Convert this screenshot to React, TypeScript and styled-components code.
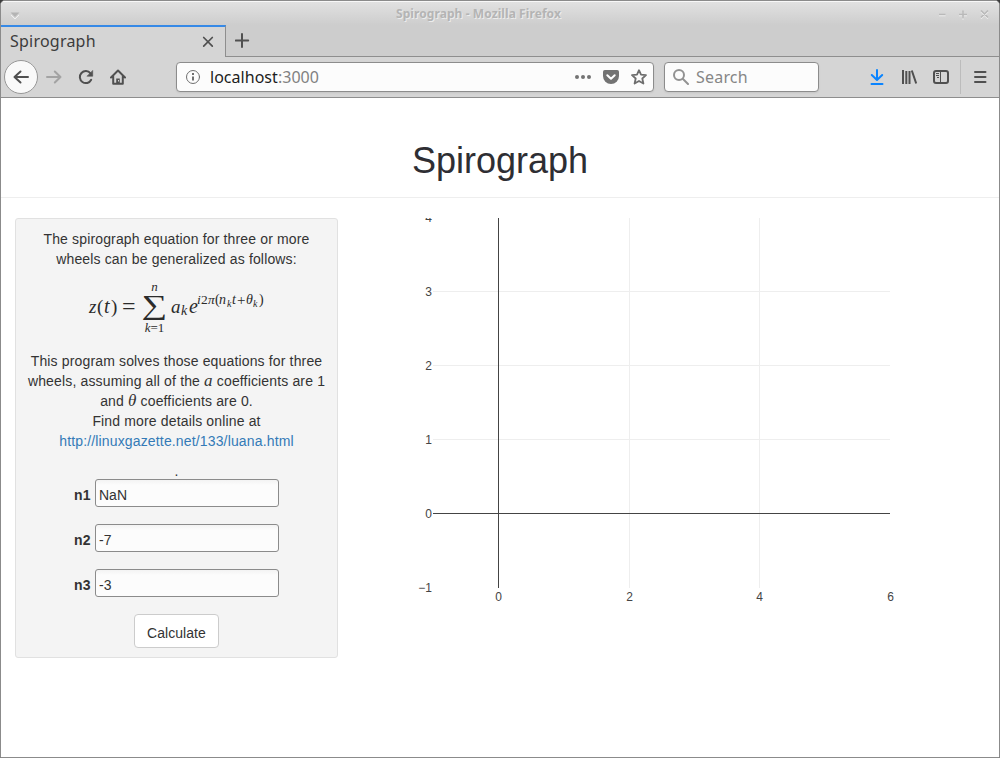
import React, { useState } from "react";
import styled, { createGlobalStyle } from "styled-components";

const UI = `"Noto Sans", "Open Sans", sans-serif`;
const PAGE = `"Liberation Sans", Arial, sans-serif`;
const MATH = `"Liberation Serif", "Times New Roman", serif`;

const GlobalStyle = createGlobalStyle`
  * { box-sizing: border-box; }
  html, body { margin: 0; padding: 0; background: #3c3c3c; overflow: hidden; }
`;

/* ---------- browser window ---------- */

const Window = styled.div`
  width: 1000px;
  height: 758px;
  display: flex;
  flex-direction: column;
  border: 1px solid #8b8b8b;
  border-radius: 5px 5px 0 0;
  background: #fff;
  overflow: hidden;
`;

const TitleBar = styled.div`
  height: 24px;
  flex: none;
  display: grid;
  grid-template-columns: 60px 1fr 60px;
  align-items: center;
  background: linear-gradient(#e1e1e1, #cdcdcd);
  border-top: 1px solid #f8f8f8;
`;

const WindowTitle = styled.div`
  margin-right: 43px;
  text-align: center;
  font: bold 12px/22px ${UI};
  letter-spacing: 0.08px;
  color: #b4b4b4;
  text-shadow: 1px 1px 0 #ececec;
`;

const TabStrip = styled.div`
  height: 32px;
  flex: none;
  display: flex;
  background: #cdcdcd;
`;

const Tab = styled.div`
  width: 225px;
  height: 32px;
  display: flex;
  align-items: center;
  justify-content: space-between;
  padding: 0 9px 2px 9px;
  border-top: 2px solid #3689e6;
  border-right: 1px solid #8e8e8e;
  background: #d5d5d5;
  font: 16px/28px ${UI};
  letter-spacing: 0.22px;
  color: #3c3c3c;
`;

const NewTab = styled.div`
  flex: 1;
  padding: 8px 0 0 9px;
  border-bottom: 1px solid #8e8e8e;
`;

const Toolbar = styled.div`
  height: 41px;
  flex: none;
  display: flex;
  align-items: center;
  background: #d5d5d5;
  border-bottom: 1px solid #8e8e8e;
  padding: 0 11px 0 3px;
`;

const Back = styled.div`
  width: 34px;
  height: 34px;
  display: flex;
  align-items: center;
  justify-content: center;
  border: 1px solid #979797;
  border-radius: 50%;
  background: #f9f9f9;
`;

const NavIcons = styled.div`
  display: flex;
  gap: 16px;
  margin-left: 8px;
`;

const Field = styled.div<{ $width: number; $gap: number }>`
  width: ${(p) => p.$width}px;
  height: 30px;
  display: flex;
  align-items: center;
  margin-left: ${(p) => p.$gap}px;
  border: 1px solid #8c8c8c;
  border-radius: 4px;
  background: #fcfcfc;
  box-shadow: 0 1px 2px rgba(0, 0, 0, 0.08);
  font: 16px/28px ${UI};
  padding: 0 6px 0 8px;
`;

const Address = styled.span`
  flex: 1;
  margin-left: 9px;
  color: #1d1d1d;
  letter-spacing: 0.03px;
`;

const Port = styled.span`
  color: #818181;
`;

const FieldIcons = styled.div`
  display: flex;
  gap: 12px;
`;

const SearchLabel = styled.span`
  margin-left: 7px;
  letter-spacing: 0.2px;
  color: #868686;
`;

const Tools = styled.div`
  display: flex;
  gap: 16px;
  margin-left: auto;
`;

const Divider = styled.div`
  width: 1px;
  height: 34px;
  margin: 0 11px;
  background: #bcbcbc;
`;

const Glyph16 = styled.svg.attrs({ width: 16, height: 16, viewBox: "0 0 16 16", fill: "none" })<{ $tone?: string }>`
  display: block;
  flex: none;
  stroke: ${(p) => p.$tone || "#505050"};
  stroke-width: 2;
  stroke-linecap: round;
  stroke-linejoin: round;
`;

const TitleGlyph = styled.svg`
  display: block;
`;

/* ---------- page ---------- */

const Page = styled.main`
  flex: 1;
  font: 14px/20px ${PAGE};
  color: #333;
`;

const Header = styled.header`
  height: 100px;
  padding-top: 43px;
  border-bottom: 1px solid #eee;
  text-align: center;
`;

const Heading = styled.h1`
  margin: 0;
  font: 400 36px/40px ${PAGE};
  color: #2e2e33;
`;

const Columns = styled.div`
  display: flex;
  gap: 15px;
  padding: 20px 14px 0;
`;

const Well = styled.section`
  width: 323px;
  height: 440px;
  padding: 10px 0 0;
  border: 1px solid #e1e1e1;
  border-radius: 3px;
  background: #f4f4f4;
  text-align: center;
`;

const Paragraph = styled.p`
  margin: 0;
  letter-spacing: 0.15px;
  white-space: nowrap;
`;

const Variable = styled.i`
  font: italic 17px/16px ${MATH};
`;

const Link = styled.a`
  color: #337ab7;
  text-decoration: none;
`;

const Formula = styled.div`
  display: flex;
  height: 72px;
  margin: 0 0 10px 73px;
  font-family: ${MATH};
  color: #2b2b2b;
  text-align: left;
`;

/* A symbol in a slot of fixed width, set on the given baseline of the formula. */
const Sym = styled.span<{ $w: number; $base: number; $size: number; $it?: boolean }>`
  display: block;
  width: ${(p) => p.$w}px;
  margin-top: ${(p) => p.$base - 9 - 0.3375 * p.$size}px;
  font-size: ${(p) => p.$size}px;
  line-height: 20px;
  height: 20px;
  font-style: ${(p) => (p.$it ? "italic" : "normal")};
  white-space: nowrap;
`;

const SumStack = styled.div`
  width: 29px;
  height: 72px;
  display: grid;
  grid-template-rows: 16px 25px 16px;
  justify-items: center;
  padding: 10px 4px 0 0;
`;

const Limit = styled.span`
  font-size: 13px;
  line-height: 16px;
  white-space: nowrap;
`;

const Sigma = styled.span`
  font-size: 27px;
  line-height: 20px;
  transform: scaleX(1.33);
`;

const Row = styled.label`
  display: flex;
  height: 28px;
  margin: 0 0 17px 58px;
  font-weight: bold;
  line-height: 32px;
`;

const RowName = styled.span`
  width: 21px;
  text-align: left;
  letter-spacing: 0.3px;
`;

const Input = styled.input`
  width: 184px;
  height: 28px;
  padding: 4px 3px 0;
  border: 1px solid #8b8b8b;
  border-radius: 3px;
  background: linear-gradient(#f3f3f3, #fcfcfc 5px);
  font: 14px/20px ${PAGE};
  color: #333;
  outline: none;
`;

const Dot = styled.div`
  height: 18px;
  margin-top: 10px;
`;

const Button = styled.button`
  width: 85px;
  height: 34px;
  display: block;
  margin: 0 0 0 118px;
  padding: 3px 0 0;
  border: 1px solid #ccc;
  border-radius: 4px;
  background: #fff;
  font: 14px/20px ${PAGE};
  letter-spacing: 0.05px;
  color: #333;
`;

const Chart = styled.svg`
  display: block;
  font: 12px ${PAGE};
  fill: #444;
`;

function Equation() {
  return (
    <Formula>
      <Sym $w={8} $base={43} $size={19} $it>z</Sym>
      <Sym $w={7} $base={43} $size={19}>(</Sym>
      <Sym $w={7} $base={43} $size={20} $it>t</Sym>
      <Sym $w={11} $base={43} $size={19}>)</Sym>
      <Sym $w={20} $base={44} $size={24}>=</Sym>
      <SumStack>
        <Limit><i>n</i></Limit>
        <Sigma>∑</Sigma>
        <Limit><i>k</i>=1</Limit>
      </SumStack>
      <Sym $w={10} $base={43} $size={19} $it>a</Sym>
      <Sym $w={8} $base={46} $size={14} $it>k</Sym>
      <Sym $w={8} $base={43} $size={20} $it>e</Sym>
      <Sym $w={4} $base={35} $size={13.5} $it>i</Sym>
      <Sym $w={7} $base={35} $size={13.5}>2</Sym>
      <Sym $w={7} $base={35} $size={13.5} $it>π</Sym>
      <Sym $w={4} $base={35} $size={14}>(</Sym>
      <Sym $w={8} $base={35} $size={14} $it>n</Sym>
      <Sym $w={5} $base={37} $size={10} $it>k</Sym>
      <Sym $w={5} $base={35} $size={14} $it>t</Sym>
      <Sym $w={9} $base={35} $size={15}>+</Sym>
      <Sym $w={7} $base={35} $size={14} $it>θ</Sym>
      <Sym $w={6} $base={37} $size={10} $it>k</Sym>
      <Sym $w={5} $base={35} $size={14}>)</Sym>
    </Formula>
  );
}

const xTicks = [0, 2, 4, 6];
const xPos = [145.5, 276.5, 406.5, 537.5];
const yTicks = ["4", "3", "2", "1", "0", "−1"];
const yPos = [-0.5, 73.5, 147.5, 221.5, 295.5, 369.5];

function Plot() {
  return (
    <Chart width="632" height="440" viewBox="0 0 632 440">
      {xPos.slice(1, 3).map((x) => (
        <line key={x} x1={x} x2={x} y1="0" y2="370" stroke="#eee" />
      ))}
      {yPos.slice(1, 4).map((y) => (
        <line key={y} x1="80" x2="537" y1={y} y2={y} stroke="#eee" />
      ))}
      <line x1="145.5" x2="145.5" y1="0" y2="370" stroke="#444" />
      <line x1="80" x2="537" y1="295.5" y2="295.5" stroke="#444" />
      {yTicks.map((t, i) => (
        <text key={t} x="79" y={yPos[i] + 4.5} textAnchor="end">{t}</text>
      ))}
      {xTicks.map((t, i) => (
        <text key={t} x={xPos[i]} y="383" textAnchor="middle">{t}</text>
      ))}
    </Chart>
  );
}

export default function App() {
  const [values, setValues] = useState(["NaN", "-7", "-3"]);
  return (
    <>
      <GlobalStyle />
      <Window>
        <TitleBar>
          <TitleGlyph width="60" height="22">
            <path d="M10 12l4 4 4-4" fill="none" stroke="#f0f0f0" />
            <path d="M9.5 9.5h9L14 14z" fill="#b4b4b4" />
          </TitleGlyph>
          <WindowTitle>Spirograph - Mozilla Firefox</WindowTitle>
          <TitleGlyph width="60" height="22" fill="none" strokeWidth="1.6">
            <path d="M-2 12.5h8.500M20 12.5h8M24 8.5v8M42 8.500l7 7M49 8.500l-7 7" stroke="#f0f0f0" />
            <path d="M-2 11.500h8.500M20 11.500h8M24 7.500v8M42 7.500l7 7M49 7.500l-7 7" stroke="#b9b9b9" />
          </TitleGlyph>
        </TitleBar>
        <TabStrip>
          <Tab>
            Spirograph
            <Glyph16><path d="M3.700 4.500l8.600 8.600M12.300 4.500l-8.600 8.600" strokeWidth="1.7" /></Glyph16>
          </Tab>
          <NewTab>
            <Glyph16><path d="M7 1v13M0.800 7.500h12.400" /></Glyph16>
          </NewTab>
        </TabStrip>
        <Toolbar>
          <Back>
            <Glyph16><path d="M1.500 8h13.500M7.500 2.500L1.500 8l6 5.500" /></Glyph16>
          </Back>
          <NavIcons>
            <Glyph16 $tone="#a3a3a3"><path d="M1 8h13.500M8.800 2.500L14.500 8l-5.700 5.500" /></Glyph16>
            <Glyph16>
              <path d="M13.200 10.800A6 6 0 1 1 12.500 4.300" />
              <path d="M14.700 1.800v5.400H9.300z" fill="#505050" strokeWidth="0.6" />
            </Glyph16>
            <Glyph16>
              <path d="M1 8.500L8 1.500L15 8.500M3.200 7.500V14.700h9.600V7.500" />
              <path d="M8 14.500v-5" strokeWidth="3.600" strokeLinecap="butt" />
              <path d="M8.500 11v1.500" strokeWidth="1" stroke="#d5d5d5" strokeLinecap="butt" />
            </Glyph16>
          </NavIcons>
          <Field $width={478} $gap={50}>
            <Glyph16 $tone="#6f6f6f">
              <circle cx="8" cy="8" r="6.5" strokeWidth="1" />
              <path d="M8 7.5v4" strokeLinecap="butt" />
              <path d="M8 4v2" strokeLinecap="butt" />
            </Glyph16>
            <Address>localhost<Port>:3000</Port></Address>
            <FieldIcons>
              <Glyph16>
                <g fill="#737373" stroke="none"><circle cx="2" cy="8" r="2" /><circle cx="8" cy="8" r="2" /><circle cx="14" cy="8" r="2" /></g>
              </Glyph16>
              <Glyph16>
                <path d="M1.8 1h12.4q1.8 0 1.8 1.8V7a8 8 0 0 1-16 0V2.8Q0 1 1.8 1z" fill="#737373" stroke="none" />
                <path d="M4.300 6.200L8 9.800l3.700-3.600" stroke="#fff" />
              </Glyph16>
              <Glyph16 $tone="#6e6e6e">
                <path d="M8 1.200l2 4.500 5 .5-3.700 3.300 1.100 5L8 12l-4.400 2.500 1.100-5L1 6.200l5-.5z" strokeWidth="1.8" />
              </Glyph16>
            </FieldIcons>
          </Field>
          <Field $width={155} $gap={10}>
            <Glyph16 $tone="#929292"><circle cx="6" cy="6" r="5" /><path d="M10 10l5 5" /></Glyph16>
            <SearchLabel>Search</SearchLabel>
          </Field>
          <Tools>
            <Glyph16 $tone="#0a84ff"><path d="M8 1v9.500M2.800 6L8 11l5.200-5M2.500 15h11" /></Glyph16>
            <Glyph16><path d="M2 1v14M5.300 2v13M8.500 2v13M10.800 1.500l4.400 13" strokeLinecap="butt" /></Glyph16>
            <Glyph16>
              <rect x="1" y="2" width="14" height="12" rx="2" />
              <path d="M7.500 2v12" strokeWidth="1" />
              <path d="M3 4.500h3M3 6.500h3M4 8.500h2" strokeWidth="1" strokeLinecap="butt" />
            </Glyph16>
          </Tools>
          <Divider />
          <Glyph16><path d="M3 3h10.500M3 8h10.500M3 13h10.500" /></Glyph16>
        </Toolbar>
        <Page>
          <Header><Heading>Spirograph</Heading></Header>
          <Columns>
            <Well>
              <Paragraph>
                The spirograph equation for three or more<br />
                wheels can be generalized as follows:
              </Paragraph>
              <Equation />
              <Paragraph>
                This program solves those equations for three<br />
                wheels, assuming all of the <Variable>a</Variable> coefficients are 1<br />
                and <Variable>θ</Variable> coefficients are 0.<br />
                Find more details online at<br />
                <Link href="http://linuxgazette.net/133/luana.html">http://linuxgazette.net/133/luana.html</Link>
              </Paragraph>
              <Dot>.</Dot>
              {values.map((v, i) => (
                <Row key={i}>
                  <RowName>n{i + 1}</RowName>
                  <Input value={v} onChange={(e) => setValues(values.map((o, j) => (j === i ? e.target.value : o)))} />
                </Row>
              ))}
              <Button>Calculate</Button>
            </Well>
            <Plot />
          </Columns>
        </Page>
      </Window>
    </>
  );
}
